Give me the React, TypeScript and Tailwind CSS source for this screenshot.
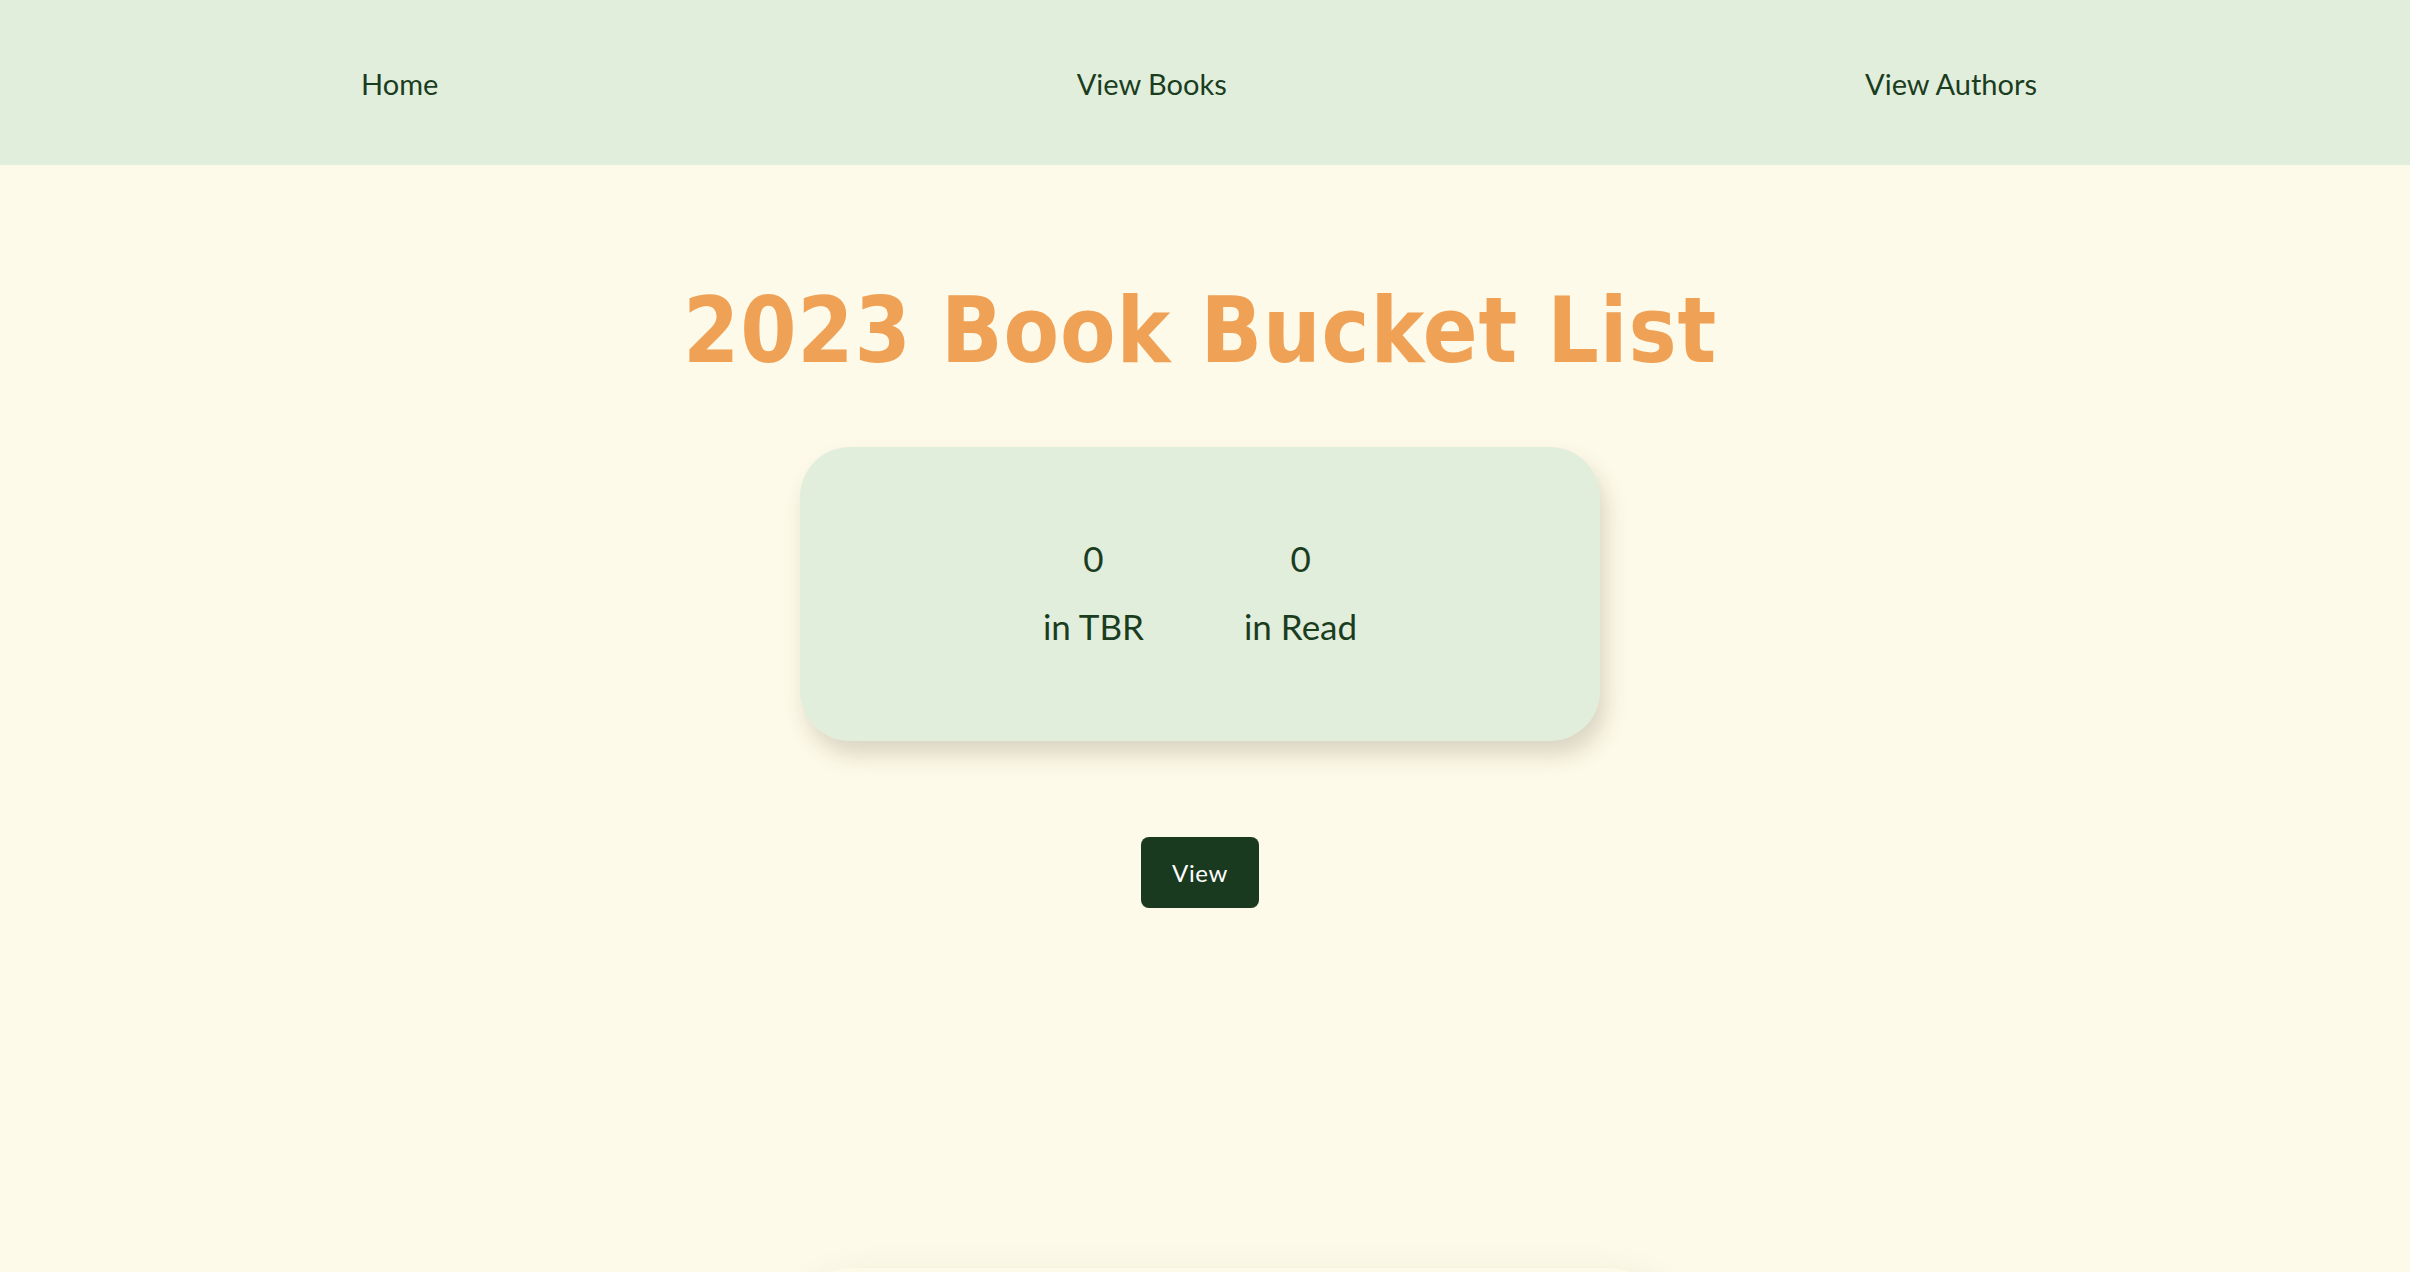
import React from 'react';

const navLinks = ['Home', 'View Books', 'View Authors'];

const stats = [
  { count: 0, label: 'in TBR' },
  { count: 0, label: 'in Read' },
];

const App: React.FC = () => {
  return (
    <div className="min-h-screen bg-[#fefae9] text-[#1b3d1f] font-['Lato','Noto_Sans',sans-serif]">
      <nav className="h-[165px] bg-[#e2eedc] flex items-center justify-between pl-[361px] pr-[373px]">
        {navLinks.map(link => (
          <a key={link} href="#" className="text-[29px] leading-none pt-[1px] text-[#1b3d1f]">
            {link}
          </a>
        ))}
      </nav>

      <main className="flex flex-col items-center pr-[10px]">
        <h1 className="mt-[113px] text-[90px] leading-[105px] font-bold tracking-[0.9px] text-[#efa156] font-['DejaVu_Sans_Condensed','DejaVu_Sans',sans-serif]">
          2023 Book Bucket List
        </h1>

        <div className="mt-[64px] w-[800px] h-[294px] rounded-[50px] bg-[#e2eedc] shadow-[6px_14px_22px_rgba(60,50,20,0.18)] flex items-center justify-center">
          <div className="flex gap-[100px] pb-[3px]">
            {stats.map(stat => (
              <div key={stat.label} className="flex flex-col items-center text-[35px] leading-none">
                <p>{stat.count}</p>
                <p className="mt-[33px]">{stat.label}</p>
              </div>
            ))}
          </div>
        </div>

        <button className="mt-[96px] w-[118px] h-[71px] rounded-[8px] bg-[#1a3a1f] text-white text-[24px] tracking-wide">
          View
        </button>

        <section className="mt-[360px] mb-16 w-[860px] h-[300px] ml-[60px] rounded-[50px] bg-[#fefae9] shadow-[6px_14px_40px_rgba(60,50,20,0.12)]" />
      </main>
    </div>
  );
};

export default App;
